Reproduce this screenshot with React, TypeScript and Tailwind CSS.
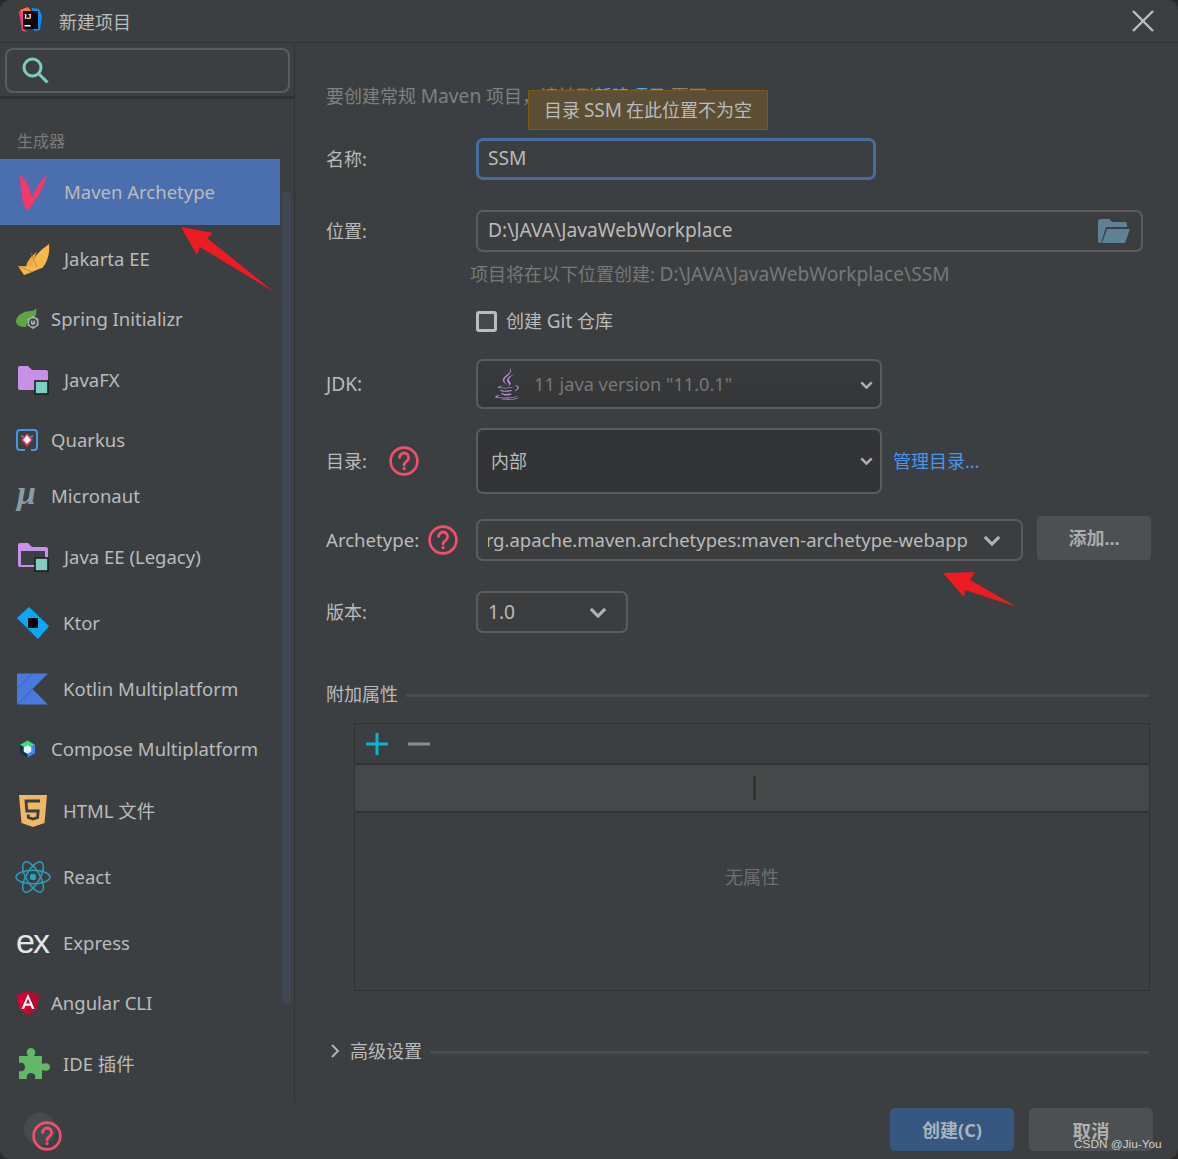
import React from "react";
import { FaJava } from "react-icons/fa";

const Help = ({ size = 30 }: { size?: number }) => (
  <svg width={size} height={size} viewBox="0 0 30 30" fill="none" stroke="#f0506e" strokeWidth="2.6" strokeLinecap="round">
    <circle cx="15" cy="15" r="13.4" />
    <path d="M10.6 11.6a4.5 4.5 0 1 1 7 3.7c-1.6 1.1-2.5 1.9-2.5 3.8" strokeWidth="2.8" />
    <circle cx="15.1" cy="22.6" r="1" strokeWidth="1.4" fill="#f0506e" />
  </svg>
);

const Chevron = ({ big }: { big?: boolean }) => (
  <svg width={big ? 18 : 13} height={big ? 11 : 8} viewBox="0 0 20 12" fill="none" stroke="#afb1b3" strokeWidth={big ? 3.4 : 3.8}>
    <path d="M2 2l8 8 8-8" />
  </svg>
);

const FolderBadge = ({ hollow }: { hollow?: boolean }) => (
  <svg width="32" height="30" viewBox="0 0 32 30">
    <path d="M1 3a2 2 0 0 1 2-2h8l4 4h14a2 2 0 0 1 2 2v16a2 2 0 0 1-2 2H3a2 2 0 0 1-2-2z" fill="#c791e8" />
    {hollow && <rect x="4" y="9" width="24" height="14" fill="#3c3f41" />}
    <rect x="18" y="16" width="13" height="13" fill="#7fcdc1" stroke="#1b1d1e" strokeWidth="1.6" />
  </svg>
);

const icons: Record<string, React.ReactNode> = {
  maven: (
    <svg width="28" height="36" viewBox="0 0 28 36">
      <path d="M0 1C6 4 10 14 12 24 15 15 21 6 27 0 25 11 18 25 8 36L5 35C2 25 0 11 0 1z" fill="#f2386c" />
    </svg>
  ),
  jakarta: (
    <svg width="32" height="31" viewBox="0 0 32 31">
      <path d="M13 23C14 13 23 6 31 0c1 8-1 17-6 23z" fill="#f7b84a" />
      <path d="M8 23c1-6 5-11 11-15-3 5-4 10-4 15z" fill="#f2a83c" />
      <path d="M0 22l26 1-17 7-3 1z" fill="#f7b84a" />
      <path d="M13 9l6 14M0 22l14 6" stroke="#a87a2e" strokeWidth=".7" fill="none" />
    </svg>
  ),
  spring: (
    <svg width="24" height="22" viewBox="0 0 24 22">
      <path d="M0 13C1 6 9 3 15 3c2 0 4-1 5-3 1 4 0 8-2 10-4 0-7 3-8 9C4 19 0 17 0 13z" fill="#5fa544" />
      <path d="M17 8l5.5 3v6.5L17 21l-5.500-3.500V11z" fill="#a9aeb2" />
      <circle cx="17" cy="14.500" r="3.200" fill="none" stroke="#3c3f41" strokeWidth="1.500" />
      <path d="M17 11.500v3" stroke="#3c3f41" strokeWidth="1.200" />
    </svg>
  ),
  javafx: <FolderBadge />,
  quarkus: (
    <svg width="22" height="22" viewBox="0 0 22 22">
      <path d="M9 21H4a3 3 0 0 1-3-3V4a3 3 0 0 1 3-3h14a3 3 0 0 1 3 3v14a3 3 0 0 1-3 3h-3" fill="none" stroke="#4695e0" strokeWidth="2" />
      <path d="M11 4l6 7-6 7-6-7z" fill="#ef2a4e" />
      <path d="M11 6l4 5-4 4-4-4z" fill="#f5f5f5" />
      <path d="M5 7l3 1M17 7l-3 1" stroke="#4695e0" strokeWidth="1.500" />
    </svg>
  ),
  micronaut: <span className="block -mt-[6px] font-['Liberation_Serif'] text-[34px] leading-none font-bold italic text-[#8a9ba3]">μ</span>,
  javaee: <FolderBadge hollow />,
  ktor: (
    <svg width="32" height="32" viewBox="0 0 32 32">
      <path d="M12 0L0 11l21 21 11-13z" fill="#07a8f5" />
      <rect x="11" y="11" width="10" height="10" fill="#000" />
    </svg>
  ),
  kotlin: (
    <svg width="31" height="32" viewBox="0 0 32 32">
      <path d="M0 0h32L16 16l16 16H0z" fill="#4a78dc" />
      <path d="M0 16L16 0M0 32l16-16" stroke="#3c5ca8" strokeWidth=".8" />
    </svg>
  ),
  compose: (
    <svg width="17" height="18" viewBox="0 0 18 18">
      <path d="M9 0l8 4.500v9L9 18l-8-4.500v-9z" fill="#10344a" />
      <path d="M9 0l8 4.500L9 9 1 4.500z" fill="#3ddc84" />
      <path d="M17 4.500v9L9 18V9z" fill="#4285f4" />
      <path d="M9 5l4 2.200v4.600L9 14l-4-2.200V7.200z" fill="#e8f0fa" />
    </svg>
  ),
  html: (
    <svg width="28" height="32" viewBox="0 0 28 32">
      <path d="M0 0h28l-2.500 28L14 32 2.500 28z" fill="#f0b767" />
      <path d="M21 6H7l.8 10h11.400l-.6 6.500L14 24l-4.600-1.500-.3-3" fill="none" stroke="#3c3f41" strokeWidth="2.800" />
    </svg>
  ),
  react: (
    <svg width="36" height="32" viewBox="-18 -16 36 32" fill="none" stroke="#2b9fbb" strokeWidth="1.500">
      <circle r="3.200" fill="#2b9fbb" stroke="none" />
      <ellipse rx="17" ry="6.800" />
      <ellipse rx="17" ry="6.800" transform="rotate(60)" />
      <ellipse rx="17" ry="6.800" transform="rotate(120)" />
    </svg>
  ),
  express: <span className="block -mt-[4px] font-['Liberation_Sans'] text-[34px] leading-none text-[#e6e6e6] tracking-[-2px]">ex</span>,
  angular: (
    <svg width="22" height="24" viewBox="0 0 22 24">
      <path d="M11 0L0 4l2 14 9 6 9-6 2-14z" fill="#d8012f" />
      <path d="M11 0l11 4-2 14-9 6z" fill="#b30a30" />
      <path d="M11 3L4.500 18H7l1.300-3.300h5.400L15 18h2.500zm-2 9.500l2-4.800 2 4.800z" fill="#fff" />
    </svg>
  ),
  plugin: (
    <svg width="32" height="32" viewBox="0 0 32 32">
      <path d="M1 8h9c-3-5 0-8 3-8s6 3 3 8h8v8c5-2 8 0 8 3s-3 5-8 3v9h-7c1-4-1-6-4-6s-5 2-4 6H1v-8c4 1 6-1 6-4s-2-5-6-4z" fill="#62b768" />
    </svg>
  ),
};

type Row = { key: string; label: string; h: string; iconW: string; iconX: string; active?: boolean };
const rows: Row[] = [
  { key: "maven", label: "Maven Archetype", h: "h-[66px]", iconW: "w-[48px]", iconX: "ml-[4px]", active: true },
  { key: "jakarta", label: "Jakarta EE", h: "h-[68px]", iconW: "w-[48px]", iconX: "ml-[2px]" },
  { key: "spring", label: "Spring Initializr", h: "h-[52px]", iconW: "w-[35px]", iconX: "ml-0" },
  { key: "javafx", label: "JavaFX", h: "h-[70px]", iconW: "w-[48px]", iconX: "ml-[1px]" },
  { key: "quarkus", label: "Quarkus", h: "h-[50px]", iconW: "w-[35px]", iconX: "ml-0" },
  { key: "micronaut", label: "Micronaut", h: "h-[62px]", iconW: "w-[35px]", iconX: "ml-[1px]" },
  { key: "javaee", label: "Java EE (Legacy)", h: "h-[60px]", iconW: "w-[48px]", iconX: "ml-[1px]" },
  { key: "ktor", label: "Ktor", h: "h-[72px]", iconW: "w-[47px]", iconX: "ml-[1px]" },
  { key: "kotlin", label: "Kotlin Multiplatform", h: "h-[60px]", iconW: "w-[47px]", iconX: "ml-[1px]" },
  { key: "compose", label: "Compose Multiplatform", h: "h-[60px]", iconW: "w-[35px]", iconX: "ml-[3px]" },
  { key: "html", label: "HTML 文件", h: "h-[64px]", iconW: "w-[47px]", iconX: "ml-[3px]" },
  { key: "react", label: "React", h: "h-[68px]", iconW: "w-[47px]", iconX: "-ml-[1px]" },
  { key: "express", label: "Express", h: "h-[64px]", iconW: "w-[47px]", iconX: "ml-0" },
  { key: "angular", label: "Angular CLI", h: "h-[56px]", iconW: "w-[35px]", iconX: "ml-[1px]" },
  { key: "plugin", label: "IDE 插件", h: "h-[66px]", iconW: "w-[47px]", iconX: "ml-[2px]" },
];

const Label = ({ children }: { children: React.ReactNode }) => (
  <div className="text-[18px] text-[#bbbbbb] whitespace-nowrap">{children}</div>
);

export default function App() {
  return (
    <div className="relative w-[1178px] h-[1159px] bg-[#2b2b2b] overflow-hidden font-['Noto_Sans','Noto_Sans_CJK_SC',sans-serif] text-[#bbbbbb]">
      <div className="w-full h-full bg-[#3c3f41] rounded-[10px] flex flex-col">
        {/* Title bar */}
        <header className="h-[43px] shrink-0 flex items-center border-b border-[#323232] pl-[18px] pr-[24px]">
          <svg width="24" height="26" viewBox="0 0 24 26" className="shrink-0 -mt-[2px]">
            <path d="M2 3l8-3 4 5-8 5z" fill="#fb7a25" />
            <path d="M1 4l6 2-2 16 5 3-6-1z" fill="#fb3d73" />
            <path d="M14 1l7 1 3 7-2 14-6 1z" fill="#0b8cf0" />
            <rect x="5" y="4" width="15" height="18" fill="#0b0b0d" />
            <text x="6.500" y="12" fontSize="8" fontWeight="700" fill="#fff" fontFamily="Liberation Sans">IJ</text>
            <rect x="6.500" y="18" width="6" height="1.500" fill="#fff" />
          </svg>
          <span className="ml-[17px] mt-[2px] text-[18px] text-[#bbbbbb]">新建项目</span>
          <svg width="22" height="22" viewBox="0 0 22 22" className="ml-auto" stroke="#bcbec0" strokeWidth="2.400">
            <path d="M1 1l20 20M21 1L1 21" />
          </svg>
        </header>

        <div className="flex h-[1059px] shrink-0">
          {/* Sidebar */}
          <aside className="w-[295px] shrink-0 border-r border-[#323232] flex flex-col">
            <div className="h-[56px] shrink-0 border-b-[3px] border-[#323232] pt-[5px] pl-[5px]">
              <div className="w-[285px] h-[45px] rounded-[8px] border-2 border-[#5a5c5e] flex items-center pl-[15px]">
                <svg width="27" height="27" viewBox="0 0 27 27" fill="none" stroke="#7fcdc1" strokeWidth="3">
                  <circle cx="10.500" cy="10.500" r="8.500" />
                  <path d="M17 17l8.500 8.500" />
                </svg>
              </div>
            </div>
            <div className="flex flex-1 min-h-0">
              <div className="w-[280px] shrink-0 flex flex-col">
                <div className="h-[60px] shrink-0 flex items-end pl-[17px] pb-[6px] text-[16px] text-[#7a7a7a]">生成器</div>
                {rows.map((r) => (
                  <div
                    key={r.key}
                    className={`${r.h} shrink-0 flex items-center pl-[16px] text-[18.5px] whitespace-nowrap ${r.active ? "bg-[#4b6eaf]" : ""}`}
                  >
                    <div className={`${r.iconW} shrink-0 flex items-center justify-start`}>
                      <div className={r.iconX}>{icons[r.key]}</div>
                    </div>
                    <span>{r.label}</span>
                  </div>
                ))}
              </div>
              <div className="flex-1 pl-[2px] pr-[3px] pt-[93px] pb-[98px]">
                <div className="w-[9px] h-full rounded-full bg-[#3f4852]" />
              </div>
            </div>
          </aside>

          {/* Form */}
          <main className="flex-1 min-w-0 pl-[31px] pr-[29px] flex flex-col">
            <div className="mt-[41px] h-[24px] text-[18px] text-[#808080] whitespace-nowrap leading-[24px]">
              要创建常规 <span className="text-[19.2px]">Maven</span> 项目，请转到<span className="text-[#589df6]">新建项目</span> 页面。
            </div>

            <div className="mt-[30px] h-[42px] grid grid-cols-[150px_400px] items-center">
              <Label>名称:</Label>
              <div className="h-[42px] rounded-[7px] border-[3px] border-[#466d9e] flex items-center pl-[9px] pb-[2px] text-[19.2px] text-[#bbbbbb]">SSM</div>
            </div>

            <div className="mt-[30px] h-[42px] grid grid-cols-[150px_667px] items-center">
              <Label>位置:</Label>
              <div className="h-[42px] rounded-[7px] border-2 border-[#5a5c5e] bg-[#3b3d3f] flex items-center justify-between pl-[10px] pr-[11px] text-[19.2px]">
                <span className="-mt-[1px]">D:\JAVA\JavaWebWorkplace</span>
                <svg width="32" height="24" viewBox="0 0 32 24">
                  <path d="M0 3a3 3 0 0 1 3-3h8l3 3h13a2 2 0 0 1 2 2v3H8L3 24H2a2 2 0 0 1-2-2z" fill="#5e8196" />
                  <path d="M9 10h23l-5 14H4z" fill="#5e8196" />
                </svg>
              </div>
            </div>

            <div className="mt-[10px] h-[24px] ml-[144px] whitespace-nowrap text-[18px] leading-[24px] text-[#787878]">
              项目将在以下位置创建: <span className="text-[19.2px]">D:\JAVA\JavaWebWorkplace\SSM</span>
            </div>

            <div className="mt-[23px] h-[24px] ml-[150px] flex items-center">
              <div className="w-[21px] h-[21px] rounded-[3px] border-[3px] border-[#bcbcbc] bg-[#43494a]" />
              <span className="ml-[9px] text-[18px] leading-[24px]">创建 <span className="text-[19px]">Git</span> 仓库</span>
            </div>

            <div className="mt-[26px] h-[50px] grid grid-cols-[150px_406px] items-center">
              <div className="text-[19.2px]">JDK:</div>
              <div className="h-[50px] rounded-[7px] border-2 border-[#5a5c5e] bg-gradient-to-b from-[#393b3d] to-[#343537] flex items-center pl-[13px] pr-[7px]">
                <FaJava className="text-[#b68dd6]" size={32} />
                <span className="ml-[11px] pt-[2px] text-[18.2px] text-[#787878]">11 java version "11.0.1"</span>
                <span className="ml-auto pt-[2px]"><Chevron /></span>
              </div>
            </div>

            <div className="mt-[19px] h-[66px] flex items-center">
              <div className="w-[150px] flex items-center">
                <Label>目录:</Label>
                <span className="ml-[22px]"><Help /></span>
              </div>
              <div className="w-[406px] h-[66px] rounded-[7px] border-2 border-[#5a5c5e] bg-[#333436] flex items-center pl-[13px] pr-[7px] text-[18px]">
                内部
                <span className="ml-auto"><Chevron /></span>
              </div>
              <a className="ml-[11px] text-[18px] text-[#4a96ee] whitespace-nowrap">管理目录...</a>
            </div>

            <div className="mt-[22px] h-[45px] flex w-[825px]">
              <div className="w-[150px] shrink-0 h-[45px] mt-[1px] flex items-center">
                <span className="text-[18.6px]">Archetype:</span>
                <span className="ml-[9px]"><Help /></span>
              </div>
              <div className="w-[547px] shrink-0 h-[42px] mt-[3px] rounded-[7px] border-2 border-[#5a5c5e] bg-[#3b3d3f] flex items-center pl-[10px] pr-[20px] text-[18.5px]">
                <span className="w-[480px] -mt-[1px] overflow-hidden whitespace-nowrap flex justify-end">org.apache.maven.archetypes:maven-archetype-webapp</span>
                <span className="ml-auto"><Chevron big /></span>
              </div>
              <div className="ml-[14px] shrink-0 w-[114px] h-[44px] rounded-[4px] bg-[#4c5052] flex items-center justify-center text-[18px] font-bold text-[#a9abad]">添加...</div>
            </div>

            <div className="mt-[30px] h-[42px] grid grid-cols-[150px_152px] items-center">
              <Label>版本:</Label>
              <div className="h-[42px] rounded-[7px] border-2 border-[#5a5c5e] bg-[#3b3d3f] flex items-center pl-[10px] pr-[19px] text-[19.2px]">
                1.0
                <span className="ml-auto"><Chevron big /></span>
              </div>
            </div>

            <div className="mt-[49px] h-[24px] flex items-center">
              <Label>附加属性</Label>
              <div className="ml-[8px] mt-[2px] flex-1 h-[3px] bg-[#4a4c4e]" />
            </div>

            <div className="mt-[17px] ml-[28px] w-[796px] h-[268px] border border-[#323232] flex flex-col">
              <div className="h-[41px] shrink-0 border-b-2 border-[#323232] flex items-center pl-[11px]">
                <svg width="22" height="22" viewBox="0 0 22 22" stroke="#0bb3cf" strokeWidth="3"><path d="M0 11h22M11 0v22" /></svg>
                <svg width="22" height="22" viewBox="0 0 22 22" stroke="#8a8c8e" strokeWidth="3" className="ml-[20px]"><path d="M0 11h22" /></svg>
              </div>
              <div className="h-[48px] shrink-0 bg-[#45494a] border-b-2 border-[#323232] flex items-center pl-[398px]">
                <div className="w-[3px] h-[24px] bg-[#323232]" />
              </div>
              <div className="flex-1 flex items-center justify-center text-[18px] text-[#6f6f6f] pb-[48px]">无属性</div>
            </div>

            <div className="mt-[48px] h-[24px] flex items-center">
              <svg width="10" height="14" viewBox="0 0 10 14" fill="none" stroke="#afb1b3" strokeWidth="2" className="ml-[4px]"><path d="M2 1l6 6-6 6" /></svg>
              <span className="ml-[10px]"><Label>高级设置</Label></span>
              <div className="ml-[8px] mt-[2px] flex-1 h-[3px] bg-[#4a4c4e]" />
            </div>
          </main>
        </div>

        {/* Footer */}
        <footer className="flex-1 flex items-start justify-between pl-[24px] pr-[25px]">
          <div className="relative mt-[11px] w-[32px] h-[32px] rounded-full bg-[#484b4d]">
            <span className="absolute left-[8px] top-[8px]"><Help size={30} /></span>
          </div>
          <div className="mt-[6px] flex gap-[15px]">
            <div className="w-[124px] h-[43px] rounded-[5px] bg-[#365880] flex items-center justify-center pt-[2px] text-[18px] font-bold text-[#a9b4bf]">创建(C)</div>
            <div className="w-[124px] h-[43px] rounded-[5px] bg-[#4c5052] flex items-center justify-center pt-[2px] text-[18.5px] font-bold text-[#b0b0b0]">取消</div>
          </div>
        </footer>
      </div>

      {/* Overlays */}
      <div className="absolute left-[528px] top-[90px] w-[240px] h-[40px] bg-[#5c4f35] border border-[#7a5a16] flex items-center justify-center text-[18px] text-[#bbbbbb] whitespace-nowrap">
        目录 <span className="text-[19px] mx-[4px]">SSM</span> 在此位置不为空
      </div>
      <div className="absolute left-[1074px] top-[1136px] font-['Liberation_Sans'] text-[11.8px] leading-[16px] text-[#d0d0d0]">CSDN @Jiu-You</div>
      <svg className="absolute inset-0 pointer-events-none" width="1178" height="1159">
        <path d="M181 227L213 233 207 238 274 292 200 247 197 255z" fill="#ed1c24" />
        <path d="M943 573L975 572 970 580 1017 607 965 590 964 597z" fill="#ed1c24" />
      </svg>
    </div>
  );
}
